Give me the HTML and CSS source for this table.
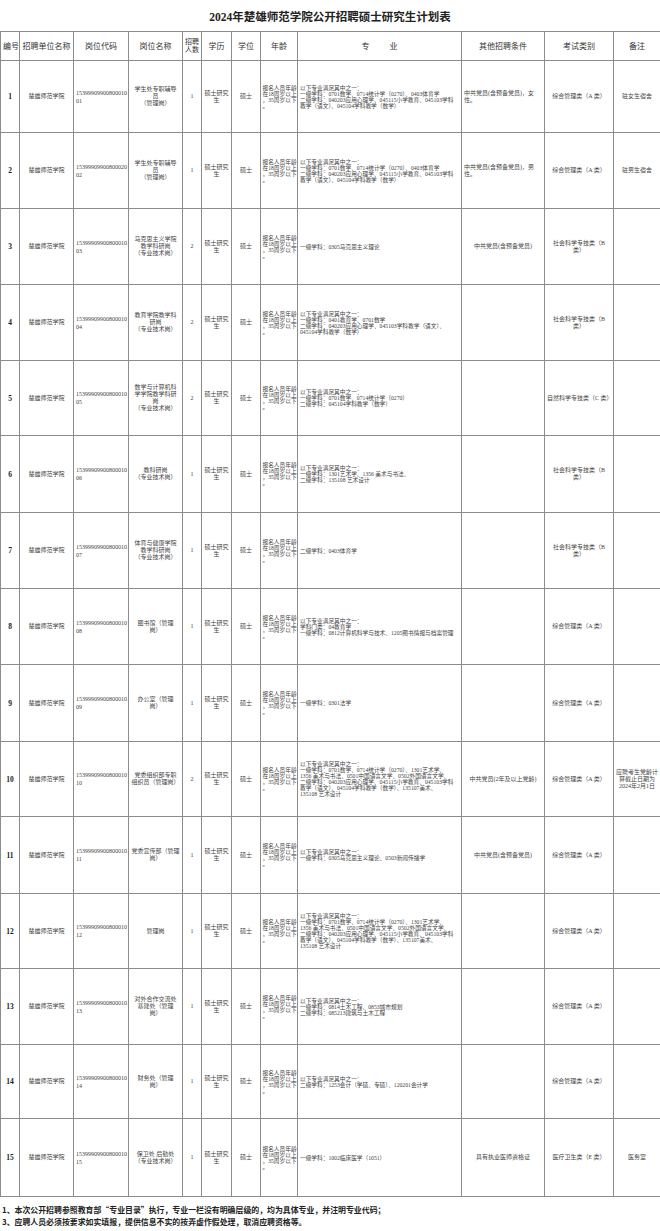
FILE: index.html
```html
<!DOCTYPE html>
<html lang="zh-CN">
<head>
<meta charset="utf-8">
<title>2024年楚雄师范学院公开招聘硕士研究生计划表</title>
<link rel="stylesheet" href="styles.css">
</head>
<body>
<div class="sheet">
  <div class="title">2024年楚雄师范学院公开招聘硕士研究生计划表</div>
  <table class="plan">
    <colgroup>
      <col class="c-no"><col class="c-unit"><col class="c-code"><col class="c-name"><col class="c-num"><col class="c-edu"><col class="c-deg"><col class="c-age"><col class="c-major"><col class="c-cond"><col class="c-exam"><col class="c-note">
    </colgroup>
    <thead>
      <tr>
        <th>编号</th><th>招聘单位名称</th><th>岗位代码</th><th>岗位名称</th><th class="two">招聘<br>人数</th><th>学历</th><th>学位</th><th>年龄</th><th>专&nbsp;&nbsp;&nbsp;&nbsp;&nbsp;&nbsp;&nbsp;&nbsp;&nbsp;&nbsp;业</th><th>其他招聘条件</th><th>考试类别</th><th>备注</th>
      </tr>
    </thead>
    <tbody>
      <tr class="r1">
        <td class="no">1</td><td>楚雄师范学院</td><td class="l code">15399909900800010<br>01</td><td>学生处专职辅导<br>员<br>（管理岗）</td><td>1</td><td>硕士研究<br>生</td><td>硕士</td>
        <td class="l age">报名人员年龄<br>在18周岁以上<br>，35周岁以下<br>。</td>
        <td class="l major">以下专业满足其中之一：<br>一级学科：0701数学、0714统计学（0270）、0403体育学<br>二级学科：040203应用心理学、045115小学教育、045103学科<br>教学（语文）、045104学科教学（数学）</td>
        <td class="l">中共党员(含预备党员)，女<br>性。</td><td>综合管理类（A 类）</td><td>驻女生宿舍</td>
      </tr>
      <tr class="r2">
        <td class="no">2</td><td>楚雄师范学院</td><td class="l code">15399909900800020<br>02</td><td>学生处专职辅导<br>员<br>（管理岗）</td><td>1</td><td>硕士研究<br>生</td><td>硕士</td>
        <td class="l age">报名人员年龄<br>在18周岁以上<br>，35周岁以下<br>。</td>
        <td class="l major">以下专业满足其中之一：<br>一级学科：0701数学、0714统计学（0270）、0403体育学<br>二级学科：040203应用心理学、045115小学教育、045103学科<br>教学（语文）、045104学科教学（数学）</td>
        <td class="l">中共党员(含预备党员)，男<br>性。</td><td>综合管理类（A 类）</td><td>驻男生宿舍</td>
      </tr>
      <tr class="r3">
        <td class="no">3</td><td>楚雄师范学院</td><td class="l code">15399909900800010<br>03</td><td>马克思主义学院<br>教学科研岗<br>（专业技术岗）</td><td>2</td><td>硕士研究<br>生</td><td>硕士</td>
        <td class="l age">报名人员年龄<br>在18周岁以上<br>，35周岁以下<br>。</td>
        <td class="l major">一级学科：0305马克思主义理论</td>
        <td>中共党员(含预备党员)</td><td>社会科学专技类（B<br>类）</td><td></td>
      </tr>
      <tr class="r4">
        <td class="no">4</td><td>楚雄师范学院</td><td class="l code">15399909900800010<br>04</td><td>教育学院教学科<br>研岗<br>（专业技术岗）</td><td>2</td><td>硕士研究<br>生</td><td>硕士</td>
        <td class="l age">报名人员年龄<br>在18周岁以上<br>，35周岁以下<br>。</td>
        <td class="l major">以下专业满足其中之一：<br>一级学科：0401教育学、0701数学<br>二级学科：040203应用心理学、045103学科教学（语文）、<br>045104学科教学（数学）</td>
        <td></td><td>社会科学专技类（B<br>类）</td><td></td>
      </tr>
      <tr class="r5">
        <td class="no">5</td><td>楚雄师范学院</td><td class="l code">15399909900800010<br>05</td><td>数学与计算机科<br>学学院教学科研<br>岗<br>（专业技术岗）</td><td>2</td><td>硕士研究<br>生</td><td>硕士</td>
        <td class="l age">报名人员年龄<br>在18周岁以上<br>，35周岁以下<br>。</td>
        <td class="l major">以下专业满足其中之一：<br>一级学科：0701数学、0714统计学（0270）<br>二级学科：045104学科教学（数学）</td>
        <td></td><td>自然科学专技类（C 类）</td><td></td>
      </tr>
      <tr class="r6">
        <td class="no">6</td><td>楚雄师范学院</td><td class="l code">15399909900800010<br>06</td><td>教科研岗<br>（专业技术岗）</td><td>1</td><td>硕士研究<br>生</td><td>硕士</td>
        <td class="l age">报名人员年龄<br>在18周岁以上<br>，35周岁以下<br>。</td>
        <td class="l major">以下专业满足其中之一：<br>一级学科：1301艺术学、1356 美术与书法、<br>二级学科：135108 艺术设计</td>
        <td></td><td>社会科学专技类（B<br>类）</td><td></td>
      </tr>
      <tr class="r7">
        <td class="no">7</td><td>楚雄师范学院</td><td class="l code">15399909900800010<br>07</td><td>体育与健康学院<br>教学科研岗<br>（专业技术岗）</td><td>1</td><td>硕士研究<br>生</td><td>硕士</td>
        <td class="l age">报名人员年龄<br>在18周岁以上<br>，35周岁以下<br>。</td>
        <td class="l major">二级学科：0403体育学</td>
        <td></td><td>社会科学专技类（B<br>类）</td><td></td>
      </tr>
      <tr class="r8">
        <td class="no">8</td><td>楚雄师范学院</td><td class="l code">15399909900800010<br>08</td><td>图书馆（管理<br>岗）</td><td>1</td><td>硕士研究<br>生</td><td>硕士</td>
        <td class="l age">报名人员年龄<br>在18周岁以上<br>，35周岁以下<br>。</td>
        <td class="l major">以下专业满足其中之一：<br>学科门类：04教育学<br>一级学科：0812计算机科学与技术、1205图书情报与档案管理</td>
        <td></td><td>综合管理类（A 类）</td><td></td>
      </tr>
      <tr class="r9">
        <td class="no">9</td><td>楚雄师范学院</td><td class="l code">15399909900800010<br>09</td><td>办公室（管理<br>岗）</td><td>1</td><td>硕士研究<br>生</td><td>硕士</td>
        <td class="l age">报名人员年龄<br>在18周岁以上<br>，35周岁以下<br>。</td>
        <td class="l major">一级学科：0301法学</td>
        <td></td><td>综合管理类（A 类）</td><td></td>
      </tr>
      <tr class="r10">
        <td class="no">10</td><td>楚雄师范学院</td><td class="l code">15399909900800010<br>10</td><td>党委组织部专职<br>组织员（管理岗）</td><td>2</td><td>硕士研究<br>生</td><td>硕士</td>
        <td class="l age">报名人员年龄<br>在18周岁以上<br>，35周岁以下<br>。</td>
        <td class="l major">以下专业满足其中之一：<br>一级学科：0701数学、0714统计学（0270）、1301艺术学、<br>1356 美术与书法、0501中国语言文学、0502外国语言文学、<br>二级学科：040203应用心理学、045115小学教育、045103学科<br>教学（语文）、045104学科教学（数学）、135107美术、<br>135108 艺术设计</td>
        <td>中共党员(2年及以上党龄)</td><td>综合管理类（A 类）</td><td>应聘考生党龄计<br>算截止日期为<br>2024年2月1日</td>
      </tr>
      <tr class="r11">
        <td class="no">11</td><td>楚雄师范学院</td><td class="l code">15399909900800010<br>11</td><td>党委宣传部（管理<br>岗）</td><td>1</td><td>硕士研究<br>生</td><td>硕士</td>
        <td class="l age">报名人员年龄<br>在18周岁以上<br>，35周岁以下<br>。</td>
        <td class="l major">以下专业满足其中之一：<br>一级学科：0305马克思主义理论、0503新闻传播学</td>
        <td>中共党员(含预备党员)</td><td>综合管理类（A 类）</td><td></td>
      </tr>
      <tr class="r12">
        <td class="no">12</td><td>楚雄师范学院</td><td class="l code">15399909900800010<br>12</td><td>管理岗</td><td>1</td><td>硕士研究<br>生</td><td>硕士</td>
        <td class="l age">报名人员年龄<br>在18周岁以上<br>，35周岁以下<br>。</td>
        <td class="l major">以下专业满足其中之一：<br>一级学科：0701数学、0714统计学（0270）、1301艺术学、<br>1356 美术与书法、0501中国语言文学、0502外国语言文学、<br>二级学科：040203应用心理学、045115小学教育、045103学科<br>教学（语文）、045104学科教学（数学）、135107美术、<br>135108 艺术设计</td>
        <td></td><td>综合管理类（A 类）</td><td></td>
      </tr>
      <tr class="r13">
        <td class="no">13</td><td>楚雄师范学院</td><td class="l code">15399909900800010<br>13</td><td>对外合作交流处<br>基建处（管理<br>岗）</td><td>1</td><td>硕士研究<br>生</td><td>硕士</td>
        <td class="l age">报名人员年龄<br>在18周岁以上<br>，35周岁以下<br>。</td>
        <td class="l major">以下专业满足其中之一：<br>一级学科：0814土木工程、0853城市规划<br>二级学科：085213建筑与土木工程</td>
        <td></td><td>综合管理类（A 类）</td><td></td>
      </tr>
      <tr class="r14">
        <td class="no">14</td><td>楚雄师范学院</td><td class="l code">15399909900800010<br>14</td><td>财务处（管理<br>岗）</td><td>1</td><td>硕士研究<br>生</td><td>硕士</td>
        <td class="l age">报名人员年龄<br>在18周岁以上<br>，35周岁以下<br>。</td>
        <td class="l major">以下专业满足其中之一：<br>二级学科：1253会计（学硕、专硕）、120201会计学</td>
        <td></td><td>综合管理类（A 类）</td><td></td>
      </tr>
      <tr class="r15">
        <td class="no">15</td><td>楚雄师范学院</td><td class="l code">15399909900800010<br>15</td><td>保卫处 后勤处<br>（专业技术岗）</td><td>1</td><td>硕士研究<br>生</td><td>硕士</td>
        <td class="l age">报名人员年龄<br>在18周岁以上<br>，35周岁以下<br>。</td>
        <td class="l major">一级学科：1002临床医学（1051）</td>
        <td>具有执业医师资格证</td><td>医疗卫生类（E 类）</td><td>医务室</td>
      </tr>
    </tbody>
  </table>
  <div class="notes">
    <p>1、本次公开招聘参照教育部“专业目录”执行，专业一栏没有明确层级的，均为具体专业，并注明专业代码；</p>
    <p>3、应聘人员必须按要求如实填报，提供信息不实的按弄虚作假处理，取消应聘资格等。</p>
  </div>
</div>
</body>
</html>
```

FILE: styles.css
```css
html, body {
  margin: 0;
  padding: 0;
  background: #ffffff;
}

body {
  font-family: "Liberation Serif", "Noto Sans CJK SC", serif;
  color: #444;
}

.sheet {
  width: 660px;
}

.title {
  height: 31px;
  display: flex;
  align-items: center;
  justify-content: center;
  font-size: 11.5px;
  font-weight: bold;
  color: #222;
}

.plan {
  width: 660px;
  border-collapse: collapse;
  table-layout: fixed;
}

.c-no { width: 19px; }
.c-unit { width: 54px; }
.c-code { width: 55px; }
.c-name { width: 54px; }
.c-num { width: 19px; }
.c-edu { width: 30px; }
.c-deg { width: 29px; }
.c-age { width: 37px; }
.c-major { width: 164px; }
.c-cond { width: 83px; }
.c-exam { width: 69px; }
.c-note { width: 47px; }

.plan th,
.plan td {
  border: 1px solid #8c8c8c;
  padding: 0 2px;
  text-align: center;
  vertical-align: middle;
  white-space: nowrap;
  overflow: hidden;
  font-size: 6px;
  line-height: 7px;
}

.plan th {
  height: 28px;
  font-weight: normal;
  font-size: 8px;
  line-height: 9px;
  color: #333;
}

.plan th.two {
  font-size: 7px;
  line-height: 8px;
}

.plan td.l {
  text-align: left;
}

.plan td.no {
  font-weight: bold;
  font-size: 7.5px;
  color: #222;
  padding: 0;
}

.plan td.code {
  line-height: 8px;
  padding-left: 2px;
}

.plan td.age {
  font-size: 5.7px;
  line-height: 6px;
  padding: 0 0 0 1.5px;
}

.plan td.major {
  font-size: 5.7px;
  line-height: 6px;
  padding: 0 1px 0 2px;
}

.r1 td { height: 71px; }
.r2 td { height: 75px; }
.r3 td { height: 75px; }
.r4 td { height: 75px; }
.r5 td { height: 74px; }
.r6 td { height: 76px; }
.r7 td { height: 75px; }
.r8 td { height: 75px; }
.r9 td { height: 76px; }
.r10 td { height: 74px; }
.r11 td { height: 76px; }
.r12 td { height: 74px; }
.r13 td { height: 75px; }
.r14 td { height: 73px; }
.r15 td { height: 77px; }

.notes {
  padding: 7px 0 0 2px;
}

.notes p {
  margin: 0;
  font-family: "Noto Sans CJK SC", "Liberation Serif", sans-serif;
  font-size: 7.9px;
  line-height: 12px;
  font-weight: bold;
  color: #222;
  white-space: nowrap;
}
```
